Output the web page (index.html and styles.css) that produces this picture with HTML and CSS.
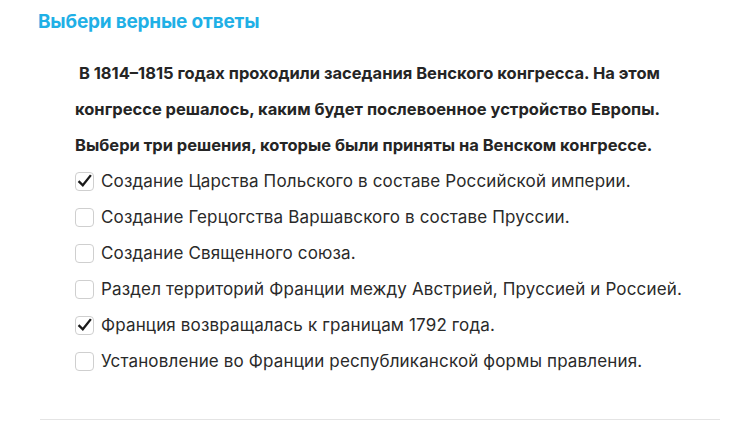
FILE: index.html
```html
<!DOCTYPE html>
<html lang="ru">
<head>
<meta charset="utf-8">
<link rel="stylesheet" href="styles.css">
</head>
<body>
<div class="page">
  <h2 class="title">Выбери верные ответы</h2>
  <div class="question">
    <p class="text">&nbsp;В 1814–1815 годах проходили заседания Венского конгресса. На этом конгрессе решалось, каким будет послевоенное устройство Европы. Выбери три решения, которые были приняты на Венском конгрессе.</p>
    <ul class="options">
      <li class="option"><span class="box checked"><svg viewBox="0 0 20 20"><path d="M3 9.5 L8 14.5 L17.5 2.5" /></svg></span><span>Создание Царства Польского в составе Российской империи.</span></li>
      <li class="option"><span class="box"></span><span>Создание Герцогства Варшавского в составе Пруссии.</span></li>
      <li class="option"><span class="box"></span><span>Создание Священного союза.</span></li>
      <li class="option"><span class="box"></span><span>Раздел территорий Франции между Австрией, Пруссией и Россией.</span></li>
      <li class="option"><span class="box checked"><svg viewBox="0 0 20 20"><path d="M3 9.5 L8 14.5 L17.5 2.5" /></svg></span><span>Франция возвращалась к границам 1792 года.</span></li>
      <li class="option"><span class="box"></span><span>Установление во Франции республиканской формы правления.</span></li>
    </ul>
  </div>
  <hr class="divider">
</div>
</body>
</html>
```
FILE: styles.css
```css
html, body {
  margin: 0;
  padding: 0;
  background: #fff;
}
.page {
  padding: 9px 15px 0 38px;
  font-family: Inter, "Noto Sans", sans-serif;
  color: #222;
}
.title {
  margin: 0;
  font-size: 19px;
  font-weight: 700;
  color: #1fb0e6;
  line-height: 25px;
  letter-spacing: -0.2px;
}
.question {
  padding: 21px 0 0 37px;
  max-width: 610px;
}
.text {
  margin: 0;
  font-size: 16.5px;
  font-weight: 700;
  line-height: 36px;
  color: #252525;
}
.options {
  list-style: none;
  margin: 0;
  padding: 0;
}
.option {
  display: flex;
  align-items: center;
  gap: 7px;
  height: 36px;
  font-size: 17px;
  letter-spacing: 0.15px;
  color: #2a2a2a;
}
.box {
  width: 17px;
  height: 17px;
  border: 1px solid #cfcfcf;
  border-radius: 4px;
  flex: none;
  display: flex;
  align-items: center;
  justify-content: center;
}
.box svg {
  width: 19px;
  height: 19px;
  fill: none;
  stroke: #1a1a1a;
  stroke-width: 2.7;
}
.divider {
  margin: 40px 0 0 2px;
  border: 0;
  border-top: 1px solid #e4e4e4;
}
```
